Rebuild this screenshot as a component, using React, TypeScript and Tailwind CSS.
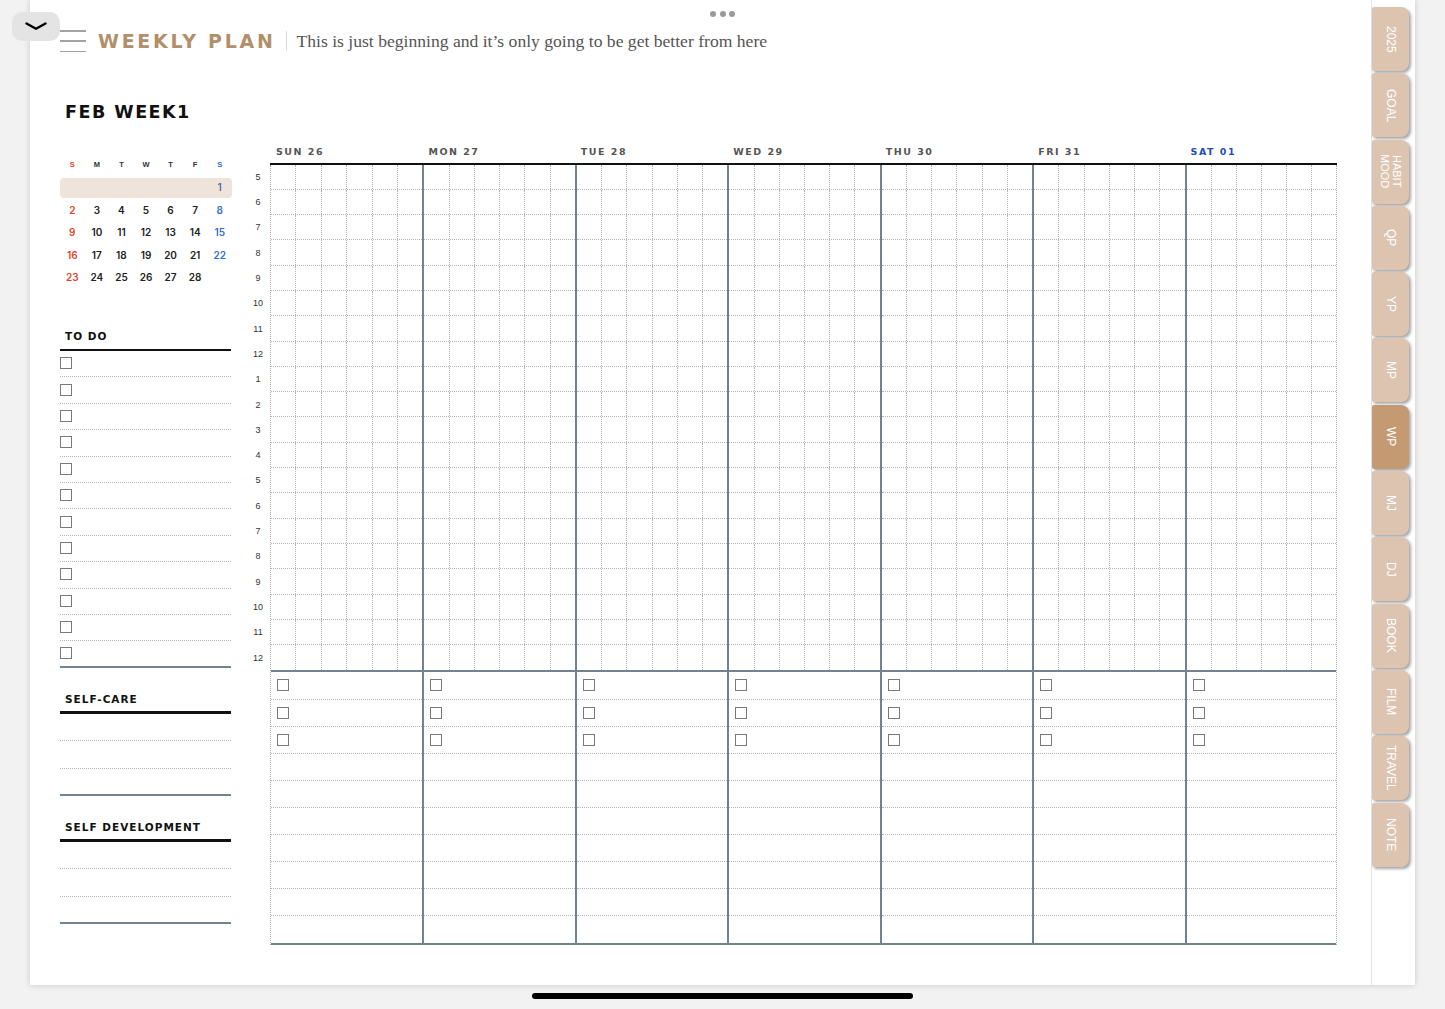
import clsx from "clsx";

const DAYS = ["SUN 26", "MON 27", "TUE 28", "WED 29", "THU 30", "FRI 31", "SAT 01"];
const HOURS = [5, 6, 7, 8, 9, 10, 11, 12, 1, 2, 3, 4, 5, 6, 7, 8, 9, 10, 11, 12];
const TABS = ["2025", "GOAL", "HABIT\nMOOD", "QP", "YP", "MP", "WP", "MJ", "DJ", "BOOK", "FILM", "TRAVEL", "NOTE"];
const WEEKS: (number | null)[][] = [
  [null, null, null, null, null, null, 1],
  [2, 3, 4, 5, 6, 7, 8],
  [9, 10, 11, 12, 13, 14, 15],
  [16, 17, 18, 19, 20, 21, 22],
  [23, 24, 25, 26, 27, 28, null],
];

function Box() {
  return <div className="w-[12px] h-[12px] border-[1.3px] border-[#7a7a7a] bg-white" />;
}

function SectionTitle({ label }: { label: string }) {
  return (
    <>
      <div className="h-[14px] flex items-center pl-[5px] font-['DejaVu_Sans',sans-serif] font-bold text-[10.5px] tracking-[1px] text-[#111]">
        {label}
      </div>
      <div className="mt-[4.5px] h-[2.5px] bg-[#111]" />
    </>
  );
}

function MiniCalendar() {
  const color = (i: number) => (i === 0 ? "text-[#e5432d]" : i === 6 ? "text-[#2f6fd8]" : "text-[#222]");
  return (
    <div className="w-[172px] font-['Inter',sans-serif]">
      <div className="grid grid-cols-7 h-[22.5px] items-center text-center font-['Liberation_Sans',sans-serif] font-bold text-[7.5px]">
        {["S", "M", "T", "W", "T", "F", "S"].map((d, i) => (
          <span key={i} className={i === 0 ? "text-[#e5432d]" : i === 6 ? "text-[#2f6fd8]" : "text-[#333]"}>
            {d}
          </span>
        ))}
      </div>
      {WEEKS.map((w, r) => (
        <div key={r} className="h-[22.5px] flex items-center">
          <div
            className={clsx(
              "grid grid-cols-7 w-full h-[20px] items-center text-center text-[10px] font-semibold",
              r === 0 && "bg-[#eee4db] rounded-[4px]"
            )}
          >
            {w.map((n, i) => (
              <span key={i} className={r === 0 && n === 1 ? "text-[#4d6fa8]" : color(i)}>
                {n ?? ""}
              </span>
            ))}
          </div>
        </div>
      ))}
    </div>
  );
}

function LeftColumn() {
  return (
    <div className="w-[171px] flex flex-col">
      <div className="h-[25px] flex items-center pl-[5px] font-['DejaVu_Sans',sans-serif] font-bold text-[17.5px] tracking-[1.5px] text-[#111]">
        FEB WEEK1
      </div>
      <div className="mt-[28.75px]">
        <MiniCalendar />
      </div>

      <div className="mt-[41.25px]">
        <SectionTitle label="TO DO" />
        {Array.from({ length: 12 }).map((_, i) => (
          <div
            key={i}
            className={clsx(
              "h-[26.4px] flex items-center pb-[1px]",
              i === 11 ? "border-b-2 border-[#73828f]" : "border-b border-dotted border-[#b5b5b5]"
            )}
          >
            <Box />
          </div>
        ))}
      </div>

      <div className="mt-[25.2px]">
        <SectionTitle label="SELF-CARE" />
        {[0, 1, 2].map((i) => (
          <div
            key={i}
            className={clsx(
              "h-[27.5px]",
              i === 2 ? "border-b-2 border-[#73828f]" : "border-b border-dotted border-[#b5b5b5]"
            )}
          />
        ))}
      </div>

      <div className="mt-[24.5px]">
        <SectionTitle label="SELF DEVELOPMENT" />
        {[0, 1, 2].map((i) => (
          <div
            key={i}
            className={clsx(
              "h-[27.5px]",
              i === 2 ? "border-b-2 border-[#73828f]" : "border-b border-dotted border-[#b5b5b5]"
            )}
          />
        ))}
      </div>
    </div>
  );
}

function WeekGrid() {
  return (
    <div className="w-[1067px]">
      <div className="grid grid-cols-7 h-[62.5px]">
        {DAYS.map((d, i) => (
          <div
            key={d}
            className={clsx(
              "flex items-end pb-[4px] pl-[6px] leading-[14px] font-['DejaVu_Sans',sans-serif] font-bold text-[9.5px] tracking-[1.5px]",
              i === 6 ? "text-[#1d4fb8]" : "text-[#555]"
            )}
          >
            {d}
          </div>
        ))}
      </div>
      <div className="grid grid-cols-7 border-t-[2.5px] border-[#111]">
        {DAYS.map((d, i) => (
          <div
            key={d}
            className={clsx(
              "flex flex-col",
              i === 0
                ? "border-l [border-left-style:dotted] border-l-[#aaaaaa]"
                : "border-l-2 border-l-[#73828f]",
              i === 6 && "border-r [border-right-style:dotted] border-r-[#aaaaaa]"
            )}
          >
            {HOURS.map((_, r) => (
              <div
                key={r}
                className={clsx("h-[25.3px] flex", r < 19 && "border-b border-dotted border-[#b5b5b5]")}
              >
                {[0, 1, 2, 3, 4, 5].map((c) => (
                  <div key={c} className={clsx("flex-1", c < 5 && "border-r border-dotted border-[#b5b5b5]")} />
                ))}
              </div>
            ))}
            <div className="border-t-2 border-b-2 border-[#73828f]">
              {Array.from({ length: 10 }).map((_, r) => (
                <div
                  key={r}
                  className={clsx(
                    "h-[27.1px] flex items-center pl-[6px]",
                    r < 9 && "border-b border-dotted border-[#b5b5b5]"
                  )}
                >
                  {r < 3 && <Box />}
                </div>
              ))}
            </div>
          </div>
        ))}
      </div>
    </div>
  );
}

function Tabs() {
  return (
    <aside className="w-[44px] border-l border-[#e3e3e3] pt-[7px] flex flex-col gap-[2.3px]">
      {TABS.map((t) => (
        <div
          key={t}
          className={clsx(
            "w-[37px] h-[64px] rounded-r-[8px] rounded-l-[2px] shadow-[2px_2px_3px_rgba(0,0,0,0.35)] flex items-center justify-center",
            t === "WP" ? "bg-[#c39a72]" : "bg-[#dcc4b0]"
          )}
        >
          <span
            className={clsx(
              "[writing-mode:vertical-rl] whitespace-pre-line text-center text-white leading-[12px] font-['Liberation_Sans',sans-serif]",
              t.includes("\n") ? "text-[11px]" : "text-[12px]"
            )}
          >
            {t}
          </span>
        </div>
      ))}
    </aside>
  );
}

export default function App() {
  return (
    <div className="relative w-[1445px] h-[1009px] overflow-hidden bg-[#f2f2f2] font-['Liberation_Sans',Arial,sans-serif]">
      <div className="ml-[30px] w-[1385px] h-[985px] bg-white shadow-[0_0_6px_rgba(0,0,0,0.18)] flex">
        <main className="w-[1341px] pl-[30px]">
          <header className="h-[54px] pt-[28px] flex items-center">
            <div className="w-[26px] h-[22px] flex flex-col justify-between">
              <div className="h-[1.5px] bg-[#a3a3a3]" />
              <div className="h-[1.5px] bg-[#a3a3a3]" />
              <div className="h-[1.5px] bg-[#a3a3a3]" />
            </div>
            <h1 className="ml-[12px] font-['DejaVu_Sans',sans-serif] font-bold text-[19px] tracking-[2.7px] text-[#b38e6a]">
              WEEKLY PLAN
            </h1>
            <div className="ml-[10px] w-px h-[20px] bg-[#dcdcdc]" />
            <p className="ml-[10px] font-['Liberation_Serif',serif] text-[17.6px] text-[#555]">
              This is just beginning and it’s only going to be get better from here
            </p>
          </header>

          <div className="mt-[46px] flex">
            <LeftColumn />
            <div className="ml-[15px] w-[24px] pt-[65px] flex flex-col">
              {HOURS.map((h, i) => (
                <div key={i} className="h-[25.3px] flex items-center justify-center text-[9px] text-[#333]">
                  {h}
                </div>
              ))}
            </div>
            <WeekGrid />
          </div>
        </main>
        <Tabs />
      </div>

      <div className="mx-auto mt-[8px] w-[381px] h-[6px] rounded-full bg-black" />

      {/* top overlays */}
      <div className="absolute left-[12px] top-[12px] w-[48px] h-[29px] rounded-[10px] bg-[#e4e4e4] flex items-center justify-center">
        <svg width="22" height="9" viewBox="0 0 22 9" fill="none">
          <path d="M1.5 1.5 L11 6.8 L20.5 1.5" stroke="#000" strokeWidth="2.4" strokeLinecap="round" strokeLinejoin="round" />
        </svg>
      </div>
      <div className="absolute top-[11px] left-[710px] flex gap-[3.7px]">
        <div className="w-[6px] h-[6px] rounded-full bg-[#9a9a9a]" />
        <div className="w-[6px] h-[6px] rounded-full bg-[#9a9a9a]" />
        <div className="w-[6px] h-[6px] rounded-full bg-[#9a9a9a]" />
      </div>
    </div>
  );
}
